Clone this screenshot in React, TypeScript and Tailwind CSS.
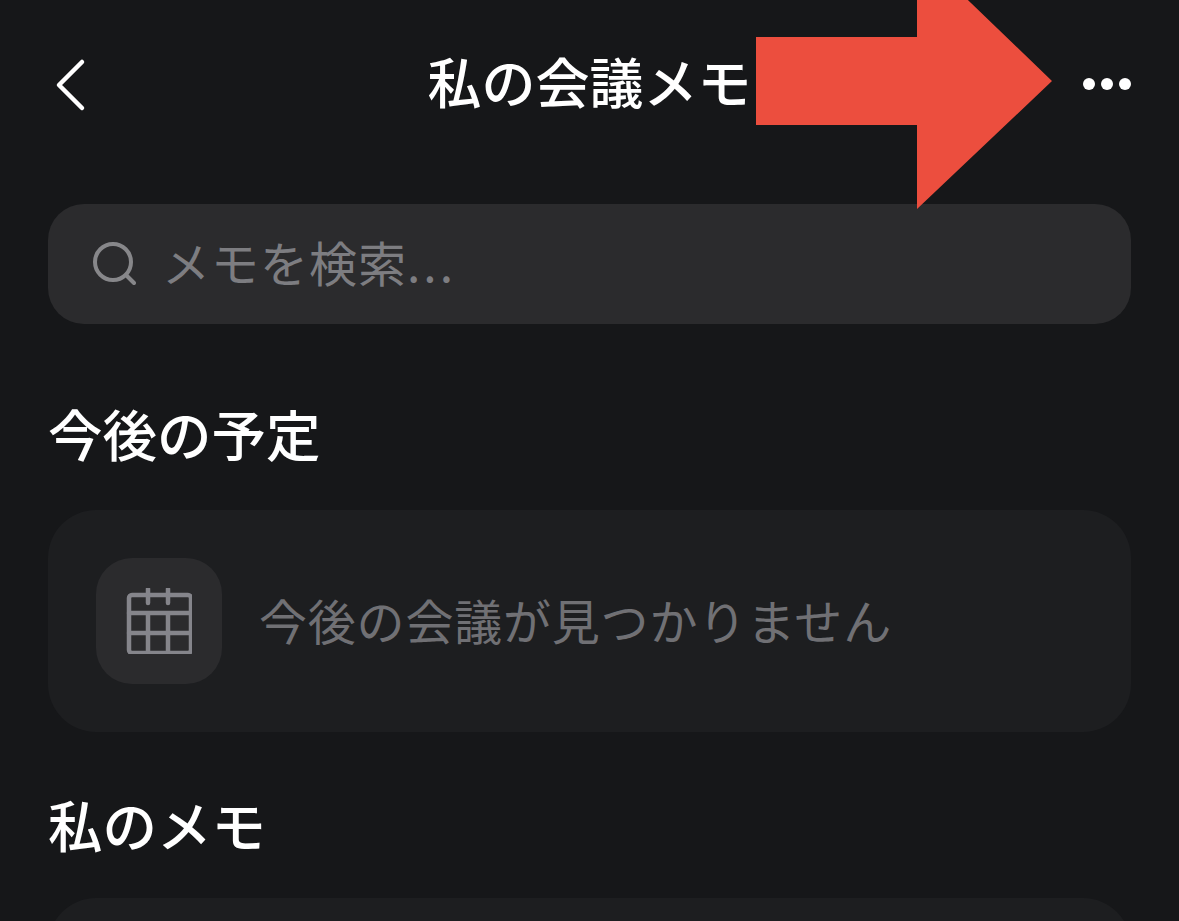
export default function App() {
  return (
    <div
      className="relative h-[921px] w-[1179px] overflow-hidden bg-[#161719] px-12 text-white"
      style={{ fontFamily: '"Noto Sans CJK JP", "Noto Sans", sans-serif' }}
    >
      {/* header */}
      <header className="flex h-[168px] items-center justify-between">
        <div className="flex w-[120px] items-center">
          <svg width="48" height="60" viewBox="0 0 48 60" fill="none" stroke="#ffffff" strokeWidth="4.5" strokeLinecap="round" strokeLinejoin="round">
            <path d="M34 8 L11 31 L34 54" />
          </svg>
        </div>
        <h1 className="mb-1.5 text-[54px] leading-none font-medium whitespace-nowrap">私の会議メモ</h1>
        <div className="flex w-[120px] items-center justify-end gap-1.5">
          <span className="h-3 w-3 rounded-full bg-white" />
          <span className="h-3 w-3 rounded-full bg-white" />
          <span className="h-3 w-3 rounded-full bg-white" />
        </div>
      </header>

      {/* search */}
      <div className="mt-9 flex h-[120px] items-center gap-[26px] rounded-[36px] bg-[#2b2b2d] pl-[44px]">
        <svg width="44" height="44" viewBox="0 0 44 44" fill="none" stroke="#87878a" strokeWidth="4" strokeLinecap="round">
          <circle cx="21" cy="20" r="18" />
          <path d="M34 33 L42 41" />
        </svg>
        <span className="pb-1.5 text-[48px] leading-none tracking-[1px] text-[#7d7d81]">
          メモを検索<span className="tracking-[3px]">...</span>
        </span>
      </div>

      <h2 className="mt-[81px] text-[54.5px] leading-[56px] font-medium">今後の予定</h2>

      {/* upcoming */}
      <div className="mt-[49px] flex h-[222px] items-center gap-[37px] rounded-[48px] bg-[#1d1e20] pl-12">
        <div className="flex h-[126px] w-[126px] items-center justify-center rounded-[36px] bg-[#2b2b2d]">
          <svg width="66" height="66" viewBox="0 0 66 66" fill="none" stroke="#85858b" strokeWidth="4.5" strokeLinecap="round" strokeLinejoin="round">
            <rect x="3" y="7" width="62" height="58" rx="3" />
            <path d="M3 25 H65 M3 45 H65 M22 25 V65 M42 25 V65 M22 1 V15 M42 1 V15" />
          </svg>
        </div>
        <span className="pb-1 text-[48px] leading-none tracking-[0.8px] text-[#707074]">今後の会議が見つかりません</span>
      </div>

      <h2 className="mt-[64px] text-[54.5px] leading-[56px] font-medium">私のメモ</h2>

      <div className="mt-[46px] h-[222px] rounded-[48px] bg-[#1d1e20]" />

      {/* red annotation arrow */}
      <svg className="absolute top-0 left-0" width="1179" height="221" viewBox="0 0 1179 221">
        <path d="M756 37 H917 V-49 L1052 81 L917 209 V125 H756 Z" fill="#ec4e3e" />
      </svg>
    </div>
  );
}
